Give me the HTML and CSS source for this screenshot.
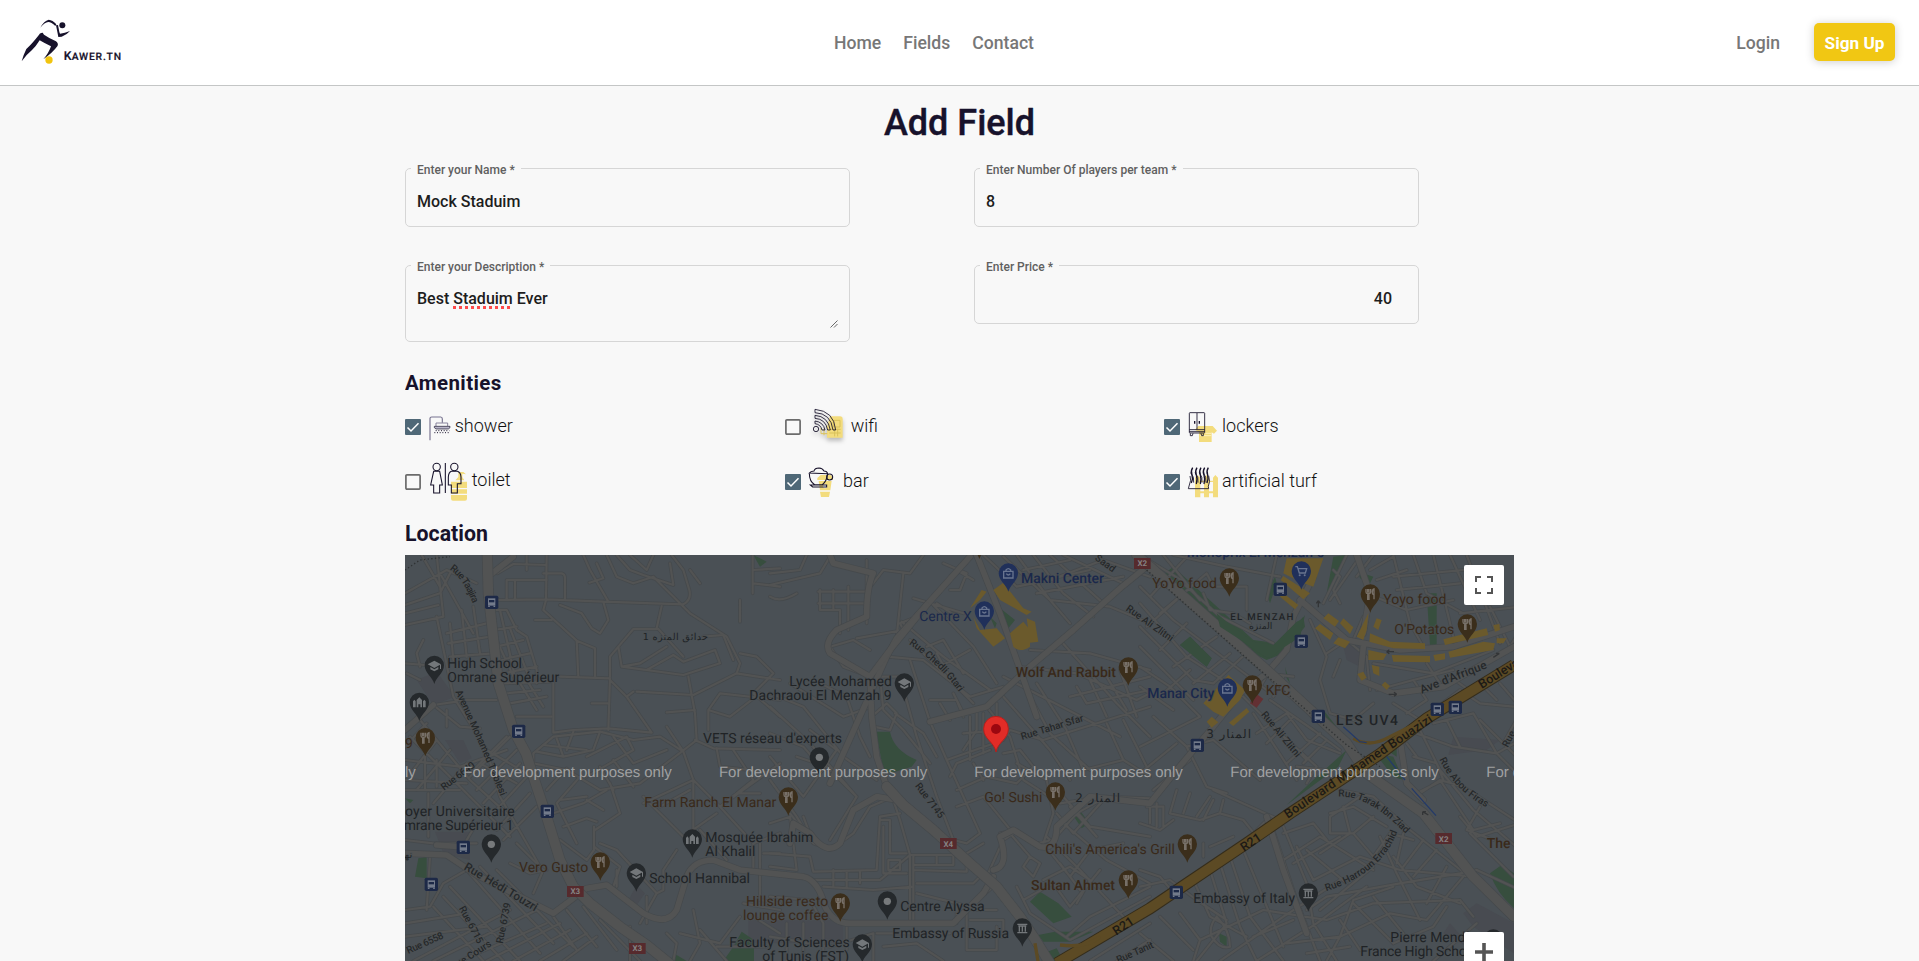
FILE: index.html
```html
<!DOCTYPE html>
<html lang="en">
<head>
<meta charset="utf-8">
<title>Kawer.tn - Add Field</title>
<link rel="stylesheet" href="styles.css">
</head>
<body>
<header class="topbar">
  <svg class="logo" viewBox="0 0 390 255">
    <g class="logo-ink">
      <path d="M121 83Q132 62 146 59Q158 60 169 73L166 78Q154 66 145 66Q134 67 121 83Z"/>
      <circle cx="187" cy="76" r="9"/>
      <path d="M168 76L174 75L178 96L180 101Q194 99 210 93Q200 105 185 110L175 111Q172 95 168 76Z"/>
      <path d="M116 106Q119 97 128 98L132 104Q150 116 168 124Q177 131 172 139Q158 158 130 178Q147 158 153 139Q136 131 119 121Q108 139 96 150Q80 163 65 184Q71 163 79 147Q96 132 116 106Z"/>
    </g>
    <circle class="logo-ball" cx="147" cy="180" r="11"/>
    <text class="logo-text" x="191" y="181" font-size="37">K<tspan x="215" font-size="31" textLength="148">AWER.TN</tspan></text>
  </svg>
  <nav class="links"><a>Home</a><a>Fields</a><a>Contact</a></nav>
  <div class="account"><a class="login">Login</a><a class="signup">Sign Up</a></div>
</header>

<main class="page">
  <h1>Add Field</h1>
  <div class="form">
    <div class="field"><label>Enter your Name *</label><span>Mock Staduim</span></div>
    <div class="field"><label>Enter Number Of players per team *</label><span>8</span></div>
    <div class="field area"><label>Enter your Description *</label><span>Best <u class="typo">Staduim</u> Ever</span>
      <svg class="grip" viewBox="0 0 8 8"><path d="M.5 7.5L7.500.5M4 7.500L7.500 4"/></svg></div>
    <div class="field price"><label>Enter Price *</label><span>40</span></div>
  </div>

  <h2 class="amenities-title">Amenities</h2>
  <div class="amenities">
    <div class="item">
      <svg class="box" viewBox="0 0 16 16"><use href="#checked"/></svg>
      <svg width="34.33" height="40" viewBox="63 140 103 120" class="ico">
        <path stroke="#77738f" stroke-width="3.500" d="M90 240V174Q90 170 95 170H122Q127 170 127 176V187"/>
        <path stroke="#77738f" d="M108 197V188H143V197"/>
        <path fill="#b9b6c9" stroke-width="2" d="M103 198H150V202L145 206H108L103 202Z"/>
        <path stroke-width="3" stroke-dasharray="3 5" d="M107 211H148M103 217H151"/></svg>
      <span>shower</span>
    </div>
    <div class="item">
      <svg class="box" viewBox="0 0 16 16"><use href="#unchecked"/></svg>
      <svg width="50.33" height="40" viewBox="1203 140 151 120" class="ico glow">
        <path class="gold" d="M1290 168H1320Q1328 168 1328 176V232H1281V200Z"/><path stroke="#d9c25b" stroke-width="3" d="M1263 203V220H1282M1272 205V225M1288 207H1322M1288 218H1322M1300 180H1320V200H1300ZM1304 205V228M1313 205V228"/>
        <circle cx="1248" cy="206" r="8"/>
        <path d="M1245 147Q1302 152 1307 209H1299Q1293 159 1245 157ZM1245 165Q1284 168 1291 209H1283Q1277 176 1245 174ZM1245 182Q1270 185 1275 209H1266Q1262 192 1245 190Z"/></svg>
      <span>wifi</span>
    </div>
    <div class="item">
      <svg class="box" viewBox="0 0 16 16"><use href="#checked"/></svg>
      <svg width="42.67" height="40" viewBox="840 140 128 120" class="ico">
        <path class="gold" d="M885 208L895 197H938L951 211L942 220L935 216V245H897V216Z"/><path stroke="#fff4c4" d="M916 219H934M900 226H934"/>
        <rect x="868" y="157" width="46" height="61" rx="2"/><path d="M891 158V208M868 208H914M868 214H914M871 219V226H877L879 219M903 219L905 226H910V219"/><path stroke-width="4" d="M884 182V190M898 182V190"/></svg>
      <span>lockers</span>
    </div>
    <div class="item toilet">
      <svg class="box" viewBox="0 0 16 16"><use href="#unchecked"/></svg>
      <svg width="51.33" height="40" viewBox="63 305 154 120" class="ico bold">
        <path class="gold" d="M166 360L175 350V335H190L198 342L187 340V350L193 360ZM153 364H201V383H153ZM153 387H201V400H153ZM153 404H201V415Q201 421 195 421H159Q153 421 153 415Z"/>
        <circle cx="110" cy="320" r="11"/><path d="M101 333H119L127 374H119V398H101V374H92Z"/>
        <path d="M136 308V398"/><circle cx="163" cy="320" r="11"/><path d="M154 333H172Q182 336 183 350V370H172V398H154V374H145V350Q146 336 154 333"/></svg>
      <span>toilet</span>
    </div>
    <div class="item">
      <svg class="box" viewBox="0 0 16 16"><use href="#checked"/></svg>
      <svg width="42.67" height="40" viewBox="1203 305 128 120" class="ico bold">
        <path class="gold" d="M1252 353L1262 344H1292L1299 352V359H1252ZM1256 362H1295L1291 390H1260ZM1260 394H1290L1287 410H1263Z"/><circle cx="1275" cy="378" r="6" fill="#fff" stroke="none"/>
        <path d="M1228 338Q1232 333 1242 332Q1244 323 1257 323Q1268 324 1272 332Q1281 332 1283 340ZM1228 339Q1228 364 1244 373H1267Q1280 364 1283 340M1231 374H1280V380H1238Z"/><circle cx="1289" cy="350" r="9"/></svg>
      <span>bar</span>
    </div>
    <div class="item">
      <svg class="box" viewBox="0 0 16 16"><use href="#checked"/></svg>
      <svg width="42.67" height="40" viewBox="840 305 128 120" class="ico">
        <path class="gold" d="M885 411V352L893 344L901 352V411ZM912 411V352L919 344L927 352V411ZM939 411V352L946 344L954 352V411ZM885 361H954V365H885ZM885 393H954V399H885Z"/>
        <path d="M870 347Q875 359 868 374L865 385H926L925 378Q932 365 926 346"/>
        <path stroke-width="4" d="M878 322Q871 333 876 344Q880 356 874 368M891 322Q884 333 889 344Q893 356 889 371M903 322Q896 333 901 344Q905 356 901 371M914 322Q907 333 912 344Q916 356 912 371M925 322Q918 333 923 344Q926 356 921 368"/>
        <path d="M872 337Q884 350 881 367M885 337Q897 350 894 367M898 337Q909 350 906 367M910 337Q920 350 918 367"/></svg>
      <span>artificial turf</span>
    </div>
  </div>

  <h2 class="location-title">Location</h2>
  <div class="map">
    <svg class="canvas" viewBox="15 15 3327 1218" preserveAspectRatio="xMinYMin slice">
      <defs>
        <g id="checked"><rect width="16" height="16" rx="1" fill="#4f6877"/><path d="M2.500 8.500L6 12L13.500 4.300" fill="none" stroke="#fff" stroke-width="1.500"/></g>
        <g id="unchecked"><rect x=".9" y=".9" width="14.200" height="14.200" rx="1" fill="none" stroke="#6b6b6b" stroke-width="1.700"/></g>
        <path id="drop" d="M0 55C-5 34-29 23-29-1A29 29 0 1 1 29-1C29 23 5 34 0 55Z"/>
        <g id="food"><use href="#drop" fill="#3b2e1b"/><path d="M-13-16V-7Q-13-2-8-2V15H-4V-2Q1-2 1-7V-16M-8-16V-5M-4-16V-5M11 15V-16Q5-14 6-4Q6 0 10 1" fill="none" stroke="#777068" stroke-width="4"/></g>
        <g id="school"><use href="#drop" fill="#25292c"/><path d="M-20-4L0-15L20-4L0 7ZM-12 4V11L0 17L12 11V4L0 11ZM17-3H20V10H17Z" fill="#73777a"/></g>
        <g id="place"><use href="#drop" fill="#25292c"/><circle r="11" fill="#777a7c"/></g>
        <g id="mosque"><use href="#drop" fill="#25292c"/><path d="M-19 14V-4L-15-9L-11-4V14ZM-8 14V-8L0-16L8-8V14H3V5H-3V14ZM11 14V-4L15-9L19-4V14Z" fill="#73777a"/></g>
        <g id="embassy"><use href="#drop" fill="#25292c"/><path d="M-15-12H15M-12-7H12M-9-7V10M0-7V10M9-7V10M-15 13H15" fill="none" stroke="#73777a" stroke-width="4"/></g>
        <g id="shop"><use href="#drop" fill="#20305a"/><path d="M-14-6H14V14H-14ZM-7-6V-10Q0-18 7-10V-6M-6 1Q0 9 6 1" fill="none" stroke="#68748f" stroke-width="4"/></g>
        <g id="cart"><use href="#drop" fill="#20305a"/><path d="M-18-14H-12L-6 5H12L16-8H-10" fill="none" stroke="#68748f" stroke-width="4"/><circle cx="-5" cy="12" r="3" fill="#68748f"/><circle cx="10" cy="12" r="3" fill="#68748f"/></g>
        <g id="bus"><rect x="-20" y="-20" width="40" height="40" rx="5" fill="#1d2947"/><path d="M-11-12H11V10H-11Z" fill="#737b8b"/><path d="M-8-7H8V0H-8Z" fill="#1d2947"/><path d="M-8 10V14M8 10V14" stroke="#737b8b" stroke-width="5"/></g>
        <g id="minor">
          <path d="M290 150L440 148L610 155L850 163Q875 150 868 120L850 60L815 15M440 15L438 150L430 180L530 272L535 380M530 272L585 295V380M430 70H485Q495 72 495 85V150M320 148V90H440M292 70L340 42L440 45M345 90V148M380 15V60M550 15L570 60L625 155M568 98L610 85L590 40M620 15L650 80L700 100L760 80L870 190L980 260L1020 340L1010 370M650 15L690 60L730 75L820 105L810 40M690 15L740 60L760 15M900 100L870 60M1020 215V150M1058 15V130M1060 60L1140 55M1060 100L1140 110M770 235L785 168M405 210H455M610 155L625 210L600 250L575 235L545 190L480 165"/>
          <path d="M775 237H700L655 290L630 320V380M655 290L665 350L850 375L960 340L945 300L850 335L820 315L740 360M775 237L850 320M665 350L720 340L800 290M1010 370L1140 390M1020 310L1070 320L1120 370L1060 430L1140 500M910 260L970 255L1000 330M480 380L630 385L625 540M630 390L680 440L755 548L625 535L520 540L460 548V380M575 460H625M680 440L700 425M710 425L880 435L910 420L1010 370M865 380L885 490L890 570L845 605M800 487L885 480M925 540V480L960 430L1140 450M925 480L990 500L1080 430M885 570L940 595L1140 600M850 605L800 530M880 690L850 605L780 560L700 570L600 545L460 560L400 610L400 640L500 660L600 720L720 700L845 605"/>
          <path d="M410 605L490 620L580 600L600 545M430 585L560 600M470 565L490 620M520 545L500 600M560 620L680 560L700 600L560 680M600 650L640 720M640 630L700 710M640 560L700 640L800 600M500 655L440 720M540 680L470 760L530 880M620 720L550 760L460 790M630 700L660 790L585 840M560 750L610 780M480 750L560 740M490 830L560 805L590 815M582 830V900L560 930L480 870M582 890L660 950L640 1010M600 880L650 900L770 1030L790 1020V960L830 900M650 960V1010M770 1030L720 1120M730 740L850 860L950 790M730 760L880 690L960 770L1140 640M780 770L870 720M880 690V840M960 770L1060 880L1140 850M900 840L980 930M1060 880V960M1080 880V1050L1140 1060M1090 910H1140M950 595L960 650L1140 670M1000 600L1060 690L960 770M1010 730H1080"/>
          <path d="M15 130L140 60L230 100M15 165L120 130L150 70M15 225L130 200L110 15M15 190L115 165M65 15L120 110M110 200L160 440L260 600L300 740L420 950M120 70L220 250M140 250L260 220M145 280L270 260M150 320L280 310M150 220L160 330M185 180L200 320M220 170L240 310M270 180H320L350 240L380 260L410 360V400M300 180L345 380M280 240L350 230M290 290L370 270M300 330L390 310M310 370L410 350M310 400L450 395M330 460L440 440M320 430L420 420M350 500H455M360 400L410 480M380 390L430 470M280 250L350 400M330 235L390 390M60 350L50 310L70 270M20 370L60 390M15 340L75 345M170 450H290M15 545L100 465L170 455M100 465L180 530L240 535M60 510L210 690L320 790M30 560L330 860M80 520L15 590M110 570L40 660M150 600L50 720M200 640L100 760M140 480V530M15 630L180 650L320 600M15 690L200 700M15 720H180M75 620V720M110 630V710M210 680L330 560M230 720L350 600M250 760L360 640M270 800L380 680M290 840L390 730M310 870L410 770M240 640L350 700M260 600L380 670M320 560L220 660"/>
          <path d="M15 870L100 880H230M85 730V860M200 870L230 820M90 920L80 1080M15 1080L90 1070L130 1000L200 960M100 1070L250 1233M130 1040L310 1233M150 1010L360 1233M200 960L420 1210M240 950L460 1180M290 960L520 1190M330 940L390 970L440 960M350 880L430 960L400 1030M15 1120L200 1090M15 1160L260 1130M40 1233L330 1080M100 1233L410 1080M180 1233L440 1120M260 1233L480 1120M340 1233L510 1140M420 1233L560 1150M490 1233L590 1160M460 1100L530 1200M500 1080L590 1190M550 1070L650 1200M600 1110L720 1233M690 1130V1233M740 1040V1120M800 1150L830 1180L820 1233M880 1080L900 1180L870 1233M840 1150L960 1180L1020 1100M900 1140L980 1233M1030 1060L1140 1080M1060 1100L1140 1150M950 1190H1100"/>
        </g>
        <g id="minor2">
          <path d="M0 105L150 70L180 20M0 70L90 60L110 15M0 140Q30 160 80 130M145 125H290L340 60L420 70L460 15M145 160H290M150 120V180H210V250M190 120V180M235 110V240M290 30V220M400 70L380 260M260 265L400 240L390 220L440 200M430 145L580 190M500 160L560 200M490 165L610 290L680 400M540 120H570L590 70L520 40M560 60L610 90M395 215L520 320L660 420M350 320L460 330L600 440L700 410M300 380L220 350L180 290L250 270L300 300M470 290L520 270L580 370M500 310L550 400M510 350L600 300M420 270L610 460M650 470L720 560L760 690L870 760L1000 740L1140 745M620 480V540L580 600M700 440L840 600L900 690M760 400L840 550L960 660M800 400L890 540M700 380L1050 560M740 350L920 370L1100 450L1140 430M780 300L960 310L1140 360M870 270L1040 460L1140 560M900 440L1140 380M920 410L950 460L1140 420M960 390L1010 500M1010 380L1070 480M1050 360L1100 500M820 570L1140 470M890 545L940 660L1060 630L1140 680M1010 520L1060 630M1060 510L1130 650M700 20L840 150L1020 170L1140 220M640 15L740 110L840 90L1000 30L1140 80M740 15L840 150L900 220M790 15L880 130L970 200M840 15L1000 160M880 15L1060 100M760 60L900 30M780 100L960 60M800 130L1060 80"/>
          <path d="M480 515L530 630L630 850L590 880L550 870L500 740L440 560L390 380L300 380M420 330L480 515M530 630L700 570L720 540L820 570M540 680L560 640L660 600M480 450H560L580 500M510 460L540 510M550 430L580 490M600 500V630M640 490V610M680 460V600M580 550L700 540M560 720L650 680L740 700L790 650L750 600L700 610M610 640L640 690M740 640L830 690L850 790L820 880L900 980L960 900L1060 880M560 770L640 740L730 850M690 850L740 840L800 880L850 870L920 790L1010 740M900 770L980 860M860 790L910 850L1000 750M880 740L960 830L1140 860M720 850L780 920L760 950L790 980L810 940L780 920M830 860L930 960L1060 1100M880 820L1010 930L1140 1000M820 990L900 950L960 990L920 1060M870 940L930 1020M330 380L340 480L400 540L480 640M305 500L350 460L380 490L360 540L310 530M375 490L460 550L500 620M0 470L120 580L260 740L180 870M0 550L100 590L160 660M0 620L100 740L200 600L120 540M0 690L80 800L110 850M260 740L170 650L80 620M60 400L220 500L305 470M150 400L230 440L270 560L300 620M0 430L100 470L220 620L320 690M60 790L130 880L180 900L250 850L300 770L370 740M100 800L130 880M0 820L60 800L80 960L0 950"/>
          <path d="M370 750L390 810L420 915V1120M430 915V1120M330 810H360V910H410M340 830V970H410M355 930H390V960H355ZM390 790L330 800L320 960L130 965L120 920L0 910M130 990H330L420 915M190 960V1010M230 965V1010M270 965V1000M160 1010L310 1020L430 1010M420 915L550 915V945H430M500 920V940M430 960L590 965V910L640 880M440 1000H610L640 970M440 1030L600 1070L670 1010M590 1070V1200H680V1130M600 1110H700V1160H600M560 1070V1120M620 1080H680M0 1040L120 1050L160 1120V1200M50 1120V1233M100 1120V1233M0 1160L180 1190L310 1150V1233M230 1120V1200M320 1150H540M340 1190L440 1180L520 1233M650 980L700 870L730 850M740 1010L780 1090L900 1170L1140 1040M760 1050L850 1000L900 1070L990 960M890 1160L960 1100L1140 1010M960 1233L1140 1120M1040 1233L1140 1170"/>
        </g>
        <g id="minor3">
          <path d="M0 110L100 210L220 300L380 420M0 160L140 320L280 410L500 630M0 230L160 390L220 400M0 290L160 450M30 140L150 10M60 190L200 70L220 110H320V180M100 15L260 50L420 80M190 130L210 180L280 190L330 220M130 100L240 200L400 280M20 230L110 150M60 300L140 220M100 350L230 260M160 400L270 310M220 400L330 300M280 450L380 370L460 380M0 350L90 410L180 500L0 590M0 410L100 480M40 500L140 590L220 570L360 690M70 430L150 360M140 590L200 710L260 730M0 670L110 580M40 720L150 630M350 430L390 360M400 440L430 380M390 450L520 540L600 600M430 420L580 550M350 550L440 490L500 570L600 610M380 580L460 500M440 640L540 550M340 490L470 690M470 650L560 660L600 720M410 540L530 650L500 700M560 570L490 640M220 720L420 810"/>
          <path d="M410 15L380 150M550 160L620 15M570 150L660 20M580 60L600 80L580 120L600 160M650 80L700 15M680 130L800 180L940 150M760 15L810 220L850 290M820 15L860 130L970 190M880 15L940 260M930 15L1020 210M980 15L1080 280M760 80L970 60M770 120L960 100M960 190L1140 170M1050 170L1110 290L1140 240M510 210L560 320L540 390L570 490L640 510L700 460M560 310L620 270L680 320L690 420M600 330L580 380M640 270L670 200M690 60L760 20M710 90L800 60M700 340L880 370L1060 300M710 420L820 390L940 360M820 390L860 450L800 490M760 460L840 510L960 420L1020 460L1120 470M900 400L860 340M930 380L1000 430"/>
          <path d="M800 540L940 590L1070 610L1140 570M840 540L900 660L1000 780L1140 900M880 520L1000 490L1070 610L1140 680M920 510L960 590M1020 510L1140 630M1090 580L1140 490M820 620L890 640L910 690L830 730M840 730L900 690L1000 840L1080 820M830 620L800 580M900 690L970 710L1140 820M960 800L1010 860L1140 820M990 850L1120 980M1020 770L980 840L1060 870M600 720L700 740L810 840L1000 990M660 740L570 800V850H640L700 800M570 790L640 770L740 830M610 770L630 850L540 910M640 850L700 920L750 850L820 870M430 850L520 820L560 870M430 930L540 860L700 960M470 890L520 990L660 920L780 960L1000 980M460 940L600 860M500 900L620 1000M540 1080L700 950M760 920L830 1010L960 1060M790 850L770 940M850 870L790 950M890 900L820 980M920 950L860 1060M720 860L770 970L840 1110M500 1080L560 1040L780 1000L960 970L1010 960"/>
          <path d="M400 840L470 1050L540 1233M430 830L500 1000L520 1120L590 1233M240 940L300 1130L350 1233M270 920L330 1100L430 1233M310 900L430 1190M0 1010L90 990L170 1050L260 1110M0 960L60 980L110 1040M210 960L260 1120L170 1233M160 990L210 1100L320 1160M120 1090L180 1170L160 1233M60 1100L160 1200M0 1150L100 1233M180 1170L370 1080L560 1110L700 1060L960 1050M240 1233L430 1100L600 990M350 1233L530 1120L680 1010M440 1180L600 1160L640 1050L760 1010M560 1233L600 1160L750 1090L860 1110L970 980M600 1110L660 1200M640 1060L760 1180M700 1040L790 1150M500 1210L630 1190M340 1160L460 1110M190 880V920M210 890L280 860M350 840L380 810M20 770H70V830M30 770V820M50 760V830M0 820L60 840L100 810M110 720L90 790L180 810L240 790L250 750M150 730L130 790M170 800L210 740M190 810L220 750M240 790L310 810L350 860M230 1100Q270 1140 270 1190Q240 1200 215 1160Q205 1130 230 1100"/>
          <path d="M0 15L140 100M70 15L180 150M1020 400L1070 450M1080 400L1140 470M1010 960L1140 1020M880 1233L1010 1120M960 1050L1000 1100M920 1070L880 1130L760 1180"/>
        </g>
        <g id="avenues">
          <path d="M15 910L140 915L230 975L460 1090L560 1015L620 1005L730 1090Q800 1130 830 1080L860 980Q880 930 940 930L1020 960L1210 980Q1255 990 1275 1070Q1300 1120 1350 1120H1660L1750 1030L1780 980M270 75L340 20M110 885L180 890M100 465L15 540M1710 20L1580 165L1490 265L1460 320L1290 700"/>
          <path d="M1290 15L1300 40L1420 70Q1400 110 1400 200L1310 240Q1270 280 1290 310L1410 380L1415 500L1430 620L1460 710M1580 165L1470 300L1410 380M1170 880L1180 820L1230 850Q1280 920 1320 880L1360 780L1430 740L1490 750M1590 515L1760 470L1890 350L2020 240L2160 115L2240 50M1730 15L1800 190L1850 330L1910 500M1780 960Q1830 950 1800 860L1840 840L1920 890Q1970 900 1970 830L2070 740L2250 760L2330 660L2440 530L2520 430L2600 370L2660 300L2680 200L2740 80"/>
          <path d="M2700 150L2840 270L3000 300L3160 290L3342 230M2890 290L2880 390L2980 430L3130 410L3342 290M2890 250L2910 130L2870 15M2600 800L2650 960L2720 1150M3000 570L3020 700L3070 750"/>
        </g>
        <g id="trunks">
          <path d="M262 15L265 130L275 220L295 400L340 540L378 610L400 680L440 800L480 930L520 1010L570 1060L660 1130L740 1185L820 1250M1460 710L1510 765L1600 840L1710 940L1790 1010L1860 1100L1900 1160L1950 1240"/>
          <path d="M2210 15L2600 360L2840 580L2900 670L3070 790L3220 980L3342 1100"/>
        </g>
      </defs>
      <rect class="land" x="15" y="15" width="3327" height="1218"/>
      <g class="shade">
        <path d="M50 390L110 365L165 440L100 465ZM135 570L190 570L215 625L180 640ZM105 845H210V930L130 910ZM1045 1110H1330V1180H1045ZM680 1060L710 1005L735 1030L700 1080ZM3160 560L3300 570L3260 600L3145 615ZM3190 1090L3230 1060L3342 1120V1210L3220 1130ZM2830 290L2880 270V350L2840 330ZM3130 1150L3150 1120L3220 1200Z"/>
      </g>
      <g class="park">
        <path d="M55 925L80 920V985L45 980ZM1025 1145L1062 1170V1233H970L1000 1190ZM830 1215L860 1233H800ZM1428 545L1470 545Q1480 600 1550 630L1535 650L1470 670L1450 660ZM1795 170L1845 210L1825 235L1800 215ZM1770 200L1790 220L1785 235ZM2015 790L2035 775L2068 820L2045 835ZM1890 1055L1920 1025L1975 1060L2015 1100L1960 1120ZM1915 1155L1965 1145L2080 1145L2010 1175H1930ZM1930 1210L1970 1195L1990 1233H1925ZM15 745L40 750L30 760Z"/>
        <path d="M2295 70L2320 50L2560 270L2635 280L2710 200L2715 230L2650 310L2600 330L2540 300ZM2340 285L2370 260L2435 325L2420 350ZM2655 350L2670 400L2660 385ZM2715 195L2700 260L2630 300L2680 250ZM3080 130H3110V285H3090ZM2625 80L2600 130L2610 160L2630 100ZM2875 65L2920 80L2910 100L2880 85ZM3270 970L3305 945L3342 970V1075Q3290 1030 3270 970ZM2925 610L2980 620L3010 690L2980 680ZM2840 600L2815 650L2660 765L2740 690ZM2990 590V620L2960 600ZM2770 480L2810 530L2780 510ZM2457 1150L2480 1160V1190L2460 1175ZM2800 20L2840 15L2780 130ZM1060 15L1100 35L1080 50Z"/>
      </g>
      <g class="casing"><use href="#minor"/><use href="#minor2" x="1110"/><use href="#minor3" x="2220"/></g>
      <g class="street"><use href="#minor"/><use href="#minor2" x="1110"/><use href="#minor3" x="2220"/></g>
      <use href="#avenues" class="casing wide"/><use href="#avenues" class="street wide"/>
      <use href="#trunks" class="casing trunk"/><use href="#trunks" class="street trunk"/>
      <path class="park" d="M2340 285L2370 260L2435 325L2420 350ZM2450 190L2480 215L2560 275L2620 285L2690 215L2712 205L2700 260L2640 300L2610 325L2590 318L2530 275L2460 230Z"/>
      <path class="zone" d="M1780 120L1810 98L1870 175L1895 185L1880 195L1800 150ZM1710 175L1745 120L1760 125L1740 150ZM1720 200L1740 240L1790 235L1815 265L1780 290L1730 235ZM1830 250L1870 215L1890 240V290Q1860 310 1840 290ZM1880 205L1905 215L1915 275L1890 278Z"/>
      <path class="zone" d="M2650 70L2660 25H2770L2740 110L2700 95ZM2642 90L2650 78L2730 130L2710 148ZM2640 140L2650 130L2695 165L2685 178ZM2770 205L2785 190L2817 213L2805 230ZM2745 235L2760 222L2800 250L2790 270ZM2820 220L2830 205L2860 232L2850 252ZM2800 280L2815 262L2850 275L2835 295ZM2870 260L2905 190L2900 240L2890 270ZM2920 230L2930 205L2945 210L2935 240ZM2910 250L2970 275L3075 280V297L2980 295L2908 275ZM2905 300L2960 312L2950 330L2905 330ZM2975 315L3090 318V337L2980 335ZM3100 315L3135 310V328L3105 333ZM3130 268L3260 235L3265 255L3135 285ZM3145 305L3250 275L3285 280L3280 300L3150 323ZM3280 225L3298 222L3300 240L3285 245ZM3290 265H3320L3310 280H3290ZM2915 345L2938 350V378L2920 370ZM2872 372L2890 365L2900 383L2885 392ZM2945 405L2955 395L2970 408L2960 420ZM2410 460L2485 375L2535 420L2520 450L2470 500L2440 485ZM2420 515L2435 500L2455 517L2435 533ZM2487 518L2540 474L2548 485L2500 528Z"/>
      <path fill="#633033" d="M2550 460L2570 432L2590 447L2570 473Z"/>
      <g class="boulevard">
        <path id="blvd" d="M1970 1240L2250 1075L2540 880L2670 790L2940 612L3080 505L3342 345"/>
        <use href="#blvd" class="blvd-fill"/>
      </g>
      <path d="M2860 565Q2910 595 2970 560L3070 510M1905 1180L1915 1240M1980 1185Q2060 1195 2100 1160" fill="none" stroke="#5c4a24" stroke-width="10"/>
      <path d="M2830 530L2880 575L2900 578M2960 620L3015 690M3035 715L3108 797" fill="none" stroke="#243a68" stroke-width="4"/>
      <path d="M2240 60L2580 360L2840 585L2940 650M15 60L60 30L150 20" fill="none" stroke="#2f3233" stroke-width="4" stroke-dasharray="4 7"/>
      <path d="M2960 305H2982M2960 305l8-6M2960 305l8 6M2755 172V152M2755 152l-6 8M2755 152l6 8M2966 433H2990M2990 433l-8-6M2990 433l-8 6M3068 785L3085 795M3068 785h10M3068 785v10M3280 322L3298 310M3298 310h-10" fill="none" stroke="#333537" stroke-width="4"/>

      <g class="roadname">
        <path id="r1" d="M148 58Q190 85 220 165"/><text><textPath href="#r1" textLength="126">Rue Taajira</textPath></text>
        <path id="r2" d="M166 425L245 600L310 760"/><text><textPath href="#r2" textLength="342">Avenue Mohamed Tlablesi</textPath></text>
        <path id="r3" d="M132 722L240 640"/><text><textPath href="#r3" textLength="120">Rue 6640</textPath></text>
        <path id="r4" d="M190 957L420 1094"/><text class="major"><textPath href="#r4" textLength="250">Rue Hédi Touzri</textPath></text>
        <path id="r5" d="M176 1075L236 1188"/><text><textPath href="#r5" textLength="122">Rue 6715</textPath></text>
        <path id="r6" d="M308 1182L334 1052"/><text><textPath href="#r6" textLength="124">Rue 6739</textPath></text>
        <path id="r7" d="M25 1212L145 1158"/><text><textPath href="#r7" textLength="118">Rue 6558</textPath></text>
        <text transform="translate(160 1262) rotate(-33)">Rue Cours</text>
        <path id="r8" d="M1526 282Q1620 345 1680 430"/><text><textPath href="#r8" textLength="210">Rue Chedli Gtari</textPath></text>
        <path id="r9" d="M1866 570L2062 510"/><text><textPath href="#r9" textLength="195">Rue Tahar Sfar</textPath></text>
        <path id="r10" d="M1544 708L1625 815"/><text><textPath href="#r10" textLength="124">Rue 7145</textPath></text>
        <text transform="translate(2083 28) rotate(36)">Saad</text>
        <path id="r11" d="M2176 180L2320 282"/><text><textPath href="#r11" textLength="166">Rue Ali Zlitni</textPath></text>
        <path id="r12" d="M2582 494L2695 631"/><text><textPath href="#r12" textLength="168">Rue Ali Zlitni</textPath></text>
        <path id="r13" d="M2815 740Q2910 735 3025 860"/><text><textPath href="#r13" textLength="238">Rue Tarak Ibn Ziad</textPath></text>
        <path id="r14" d="M2779 1024Q2960 965 2998 825"/><text><textPath href="#r14" textLength="288">Rue Harroun Errachid</textPath></text>
        <path id="r15" d="M3118 628Q3160 720 3265 775"/><text><textPath href="#r15" textLength="205">Rue Abou Firas</textPath></text>
        <path id="r16" d="M3065 431L3275 349"/><text class="major"><textPath href="#r16" textLength="212">Ave d'Afrique</textPath></text>
        <text transform="translate(3323 594) rotate(-62)">Rue</text>
        <path id="r18" d="M2155 1240L2290 1180"/><text><textPath href="#r18" textLength="118">Rue Tanit</textPath></text>
      </g>
      <g class="bigroad">
        <path id="b1" d="M2663 806L3110 507"/><text><textPath href="#b1" textLength="526">Boulevard Mohamed Bouazizi</textPath></text>
        <text transform="translate(2532 906) rotate(-34)">R21</text><text transform="translate(2149 1157) rotate(-34)">R21</text>
        <text transform="translate(3245 417) rotate(-32)">Boulevard</text>
      </g>

      <g class="shields">
        <rect x="501" y="1008" width="50" height="33"/><rect x="687" y="1179" width="50" height="33"/><rect x="1620" y="864" width="50" height="33"/><rect x="2202" y="24" width="50" height="33"/><rect x="3106" y="849" width="50" height="33"/>
        <text x="526" y="1033">X3</text><text x="712" y="1203">X3</text><text x="1645" y="890">X4</text><text x="2227" y="49">X2</text><text x="3131" y="875">X2</text>
      </g>

      <g class="label grey">
        <text x="142" y="354" textLength="224">High School</text><text x="142" y="396" textLength="336">Omrane Supérieur</text>
        <text x="-8" y="798" textLength="352">Foyer Universitaire</text><text x="-17" y="840" textLength="358">Omrane Supérieur 1</text>
        <text x="916" y="877" textLength="324">Mosquée Ibrahim</text><text x="916" y="919" textLength="150">Al Khalil</text>
        <text x="748" y="999" textLength="302">School Hannibal</text>
        <text x="1168" y="408" textLength="308">Lycée Mohamed</text><text x="1048" y="450" textLength="427">Dachraoui El Menzah 9</text>
        <text x="909" y="579" textLength="417">VETS réseau d'experts</text>
        <text x="988" y="1191" textLength="361">Faculty of Sciences</text><text x="1087" y="1232" textLength="260">of Tunis (FST)</text>
        <text x="1501" y="1083" textLength="253">Centre Alyssa</text><text x="1477" y="1164" textLength="350">Embassy of Russia</text>
        <text x="2380" y="1059" textLength="305">Embassy of Italy</text>
        <text x="2971" y="1176" textLength="269">Pierre Mendès</text><text x="2881" y="1218" textLength="352">France High School</text>
        <text x="2491" y="209" textLength="189" font-size="29" font-weight="500">EL MENZAH</text><text x="2808" y="525" textLength="186" font-weight="500">LES UV4</text>
        <text class="ar" x="728" y="269" textLength="196" font-size="29">حدائق المنزه 1</text><text class="ar" x="2026" y="757" textLength="134" font-size="36">المنار 2</text>
        <text class="ar" x="2419" y="565" textLength="134" font-size="36">المنار 3</text><text class="ar" x="2547" y="238" textLength="70" font-size="28">المنزه</text><text class="ar" x="-5" y="924" font-size="30">نهج</text>
      </g>
      <g class="label brown">
        <text x="357" y="966" textLength="208">Vero Gusto</text><text x="733" y="771" textLength="396">Farm Ranch El Manar</text>
        <text x="1038" y="1068" textLength="247">Hillside resto</text><text x="1029" y="1110" textLength="256">lounge coffee</text>
        <text x="1753" y="756" textLength="174">Go! Sushi</text><text x="1936" y="912" textLength="389">Chili's America's Grill</text>
        <text x="2257" y="114" textLength="194">YoYo food</text><text x="2950" y="162" textLength="189">Yoyo food</text><text x="2983" y="252" textLength="180">O'Potatos</text><text x="2597" y="435" textLength="74">KFC</text>
        <text x="15" y="593">9</text><text x="3260" y="894" font-weight="500">The</text>
        <text x="1847" y="381" textLength="301" font-weight="500">Wolf And Rabbit</text><text x="1893" y="1019" textLength="252" font-weight="500">Sultan Ahmet</text>
      </g>
      <g class="label blue">
        <text x="1558" y="213" textLength="157">Centre X</text><text x="1863" y="99" textLength="249" font-weight="500">Makni Center</text><text x="2242" y="444" textLength="201" font-weight="500">Manar City</text><text x="2360" y="20" textLength="413" font-weight="500">Monoprix El Menzah 6</text>
      </g>

      <use href="#school" x="103" y="347"/><use href="#mosque" x="58" y="458"/><use href="#food" x="76" y="564"/><use href="#place" x="274" y="883"/><use href="#food" x="601" y="937"/><use href="#school" x="709" y="970"/><use href="#mosque" x="877" y="868"/>
      <use href="#shop" x="1825" y="70"/><use href="#shop" x="1753" y="184"/><use href="#school" x="1513" y="400"/><use href="#place" x="1258" y="622"/><use href="#food" x="1165" y="742"/><use href="#food" x="2185" y="352"/><use href="#food" x="1966" y="727"/><use href="#food" x="2185" y="991"/><use href="#food" x="1321" y="1060"/><use href="#place" x="1462" y="1054"/><use href="#embassy" x="1867" y="1135"/><use href="#school" x="1387" y="1183"/><use href="#food" x="1738" y="-28"/>
      <use href="#food" x="2488" y="85"/><use href="#cart" x="2704" y="64"/><use href="#food" x="2911" y="133"/><use href="#food" x="3202" y="223"/><use href="#shop" x="2482" y="415"/><use href="#food" x="2557" y="406"/><use href="#food" x="2362" y="883"/><use href="#embassy" x="2725" y="1030"/><use href="#school" x="3280" y="1168"/>
      <use href="#bus" x="275" y="157"/><use href="#bus" x="356" y="544"/><use href="#bus" x="442" y="784"/><use href="#bus" x="190" y="892"/><use href="#bus" x="94" y="1003"/><use href="#bus" x="2641" y="118"/><use href="#bus" x="2704" y="274"/><use href="#bus" x="2755" y="499"/><use href="#bus" x="2392" y="586"/><use href="#bus" x="3112" y="478"/><use href="#bus" x="3166" y="472"/><use href="#bus" x="2329" y="1027"/>

      <g class="watermark">
        <text x="-578" y="682" textLength="625">For development purposes only</text><text x="190" y="682" textLength="625">For development purposes only</text><text x="957" y="682" textLength="625">For development purposes only</text><text x="1723" y="682" textLength="625">For development purposes only</text><text x="2491" y="682" textLength="625">For development purposes only</text><text x="3259" y="682" textLength="625">For development purposes only</text>
      </g>
      <path d="M1788 606C1782 575 1751 568 1751 536A37 37 0 1 1 1825 536C1825 568 1794 575 1788 606Z" fill="#e12c27" stroke="#b3201d" stroke-width="3"/><circle cx="1788" cy="537" r="15" fill="#9b0710"/>
    </svg>
    <div class="control full"><svg viewBox="0 0 18 18"><path d="M1 6V1H6M12 1H17V6M17 12V17H12M6 17H1V12"/></svg></div>
    <div class="control plus"><svg viewBox="0 0 18 18"><path d="M9 0V18M0 9H18"/></svg></div>
  </div>
</main>
</body>
</html>
```
FILE: styles.css
```css
* { box-sizing: border-box; }
body { margin: 0; height: 961px; overflow: hidden; background: #f8f8f8; font-family: Roboto, sans-serif; color: #17122b; }
.topbar { height: 86px; background: #fff; border-bottom: 1px solid #c4c6c6; display: grid; grid-template-columns: 1fr auto 1fr; align-items: center; }
.logo { width: 130px; height: 85px; }
.logo-ink, .logo-text { fill: #17122b; }
.logo-ball { fill: #f1c40f; }
.logo-text { font-weight: 500; text-rendering: geometricPrecision; stroke: #17122b; stroke-width: .6; }
.links { display: flex; gap: 22px; margin-right: 51px; font-size: 17.6px; font-weight: 500; color: #777; }
.account { display: flex; justify-content: flex-end; align-items: center; gap: 34px; padding-right: 24px; font-size: 17.6px; font-weight: 500; color: #777; }
.signup { background: #f1c713; color: #fff; width: 81px; height: 38px; line-height: 41px; text-align: center; border-radius: 5px; box-shadow: 0 1px 10px rgba(0,0,0,.2); font-size: 17.2px; font-weight: 700; margin-top: -2px; }
.page { width: 1109px; margin: 0 auto; height: 875px; overflow: hidden; display: flex; flex-direction: column; }
h1 { margin: 16px 0 24px; height: 42px; line-height: 42px; text-align: center; font-size: 36px; font-weight: 500; -webkit-text-stroke: .4px #17122b; }
.form { display: grid; grid-template-columns: 445px 445px; column-gap: 124px; row-gap: 38px; align-items: start; height: 174px; }
.field { position: relative; height: 59px; border: 1px solid #d6d6d6; border-radius: 5px; padding: 22px 11px 0; font-size: 16px; line-height: 22px; font-weight: 500; color: #1d1d1d; }
.field label { position: absolute; left: 5px; top: -8px; padding: 0 6px; background: #f8f8f8; font-size: 12px; line-height: 18px; color: #606060; }
.area { height: 77px; }
.typo { text-decoration: underline dotted #ff4a4a 2.5px; text-underline-offset: 1.5px; text-decoration-skip-ink: none; }
.grip { position: absolute; right: 11px; bottom: 13px; width: 8px; height: 8px; fill: none; stroke: #444; stroke-width: .8; }
.price { text-align: right; padding-right: 26px; }
h2 { margin: 0; font-weight: 700; line-height: 26px; }
.amenities-title { margin-top: 28px; font-size: 20.5px; letter-spacing: .4px; }
.amenities { display: grid; grid-template-columns: 380px 379px 350px; grid-auto-rows: 40px; row-gap: 15px; margin-top: 11px; height: 95px; }
.item { display: flex; align-items: center; font-size: 18px; font-weight: 300; color: #111; }
.item span { margin: -3px 0 0 -.6px; line-height: 24px; }
.toilet span { margin-top: -4px; }
.box { width: 16px; height: 16px; }
.ico { fill: none; stroke: #17122b; stroke-width: 2.6; }
.ico.bold { stroke-width: 3.2; }
.ico .gold { fill: #f3dc7d; stroke: none; }
.glow { filter: drop-shadow(0 3px 2px rgba(0,0,0,.25)); }
.location-title { margin: 19px 0 8px; font-size: 21.3px; }
.map { position: relative; flex: 1; overflow: hidden; background: #4a4f54; }
.canvas { display: block; width: 1109px; height: 406px; text-rendering: geometricPrecision; }
.land { fill: #4a5055; }
.shade { fill: #484b51; }
.park { fill: #374e3e; }
.zone { fill: #6b5a2c; }
.casing, .street { fill: none; stroke-linejoin: round; stroke-linecap: round; }
.casing { stroke: #45494c; stroke-width: 11; }
.street { stroke: #525353; stroke-width: 6.500; }
.casing.wide { stroke-width: 21; }
.street.wide { stroke-width: 17; }
.casing.trunk { stroke-width: 33; }
.street.trunk { stroke-width: 29; }
.boulevard { fill: none; stroke: #352d1c; stroke-width: 36; }
.blvd-fill { stroke: #5c4a24; stroke-width: 30; }
#blvd { stroke: inherit; stroke-width: inherit; }
.label { font-size: 42px; stroke-width: 5px; paint-order: stroke; stroke: #4b5054; stroke-opacity: .8; }
.grey { fill: #202326; }
.brown { fill: #39291a; }
.blue { fill: #1a284b; }
.ar { font-family: "DejaVu Sans", sans-serif; }
.roadname path, .bigroad path { fill: none; }
.roadname text { font-size: 30px; font-weight: 500; fill: #25282a; stroke: #4e5254; stroke-width: 3px; paint-order: stroke; }
.roadname .major { font-size: 35px; }
.bigroad text { font-size: 38px; font-weight: 500; fill: #1d1a16; }
.shields rect { fill: #562a2d; }
.shields text { font-size: 24px; font-weight: 700; fill: #858283; text-anchor: middle; }
.watermark { font-family: "Liberation Sans", sans-serif; font-size: 45px; fill: #a0a1a2; }
.control { position: absolute; right: 10px; width: 40px; height: 40px; border-radius: 2px; background: #fff; display: grid; place-items: center; }
.control svg { width: 18px; height: 18px; fill: none; stroke: #555; }
.full { top: 10px; }
.full path { stroke-width: 2; }
.plus { top: 377px; }
.plus path { stroke-width: 3.600; }
```
